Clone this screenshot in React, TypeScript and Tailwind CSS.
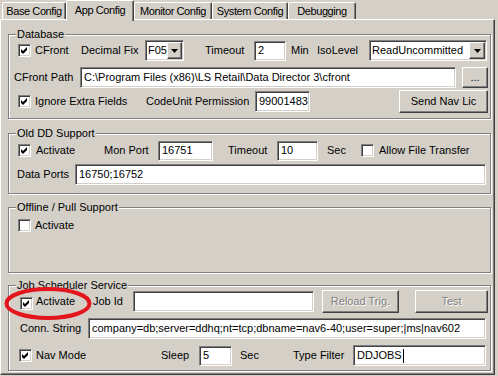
import type { ReactNode } from "react";

const sunken =
  "border border-t-[#808080] border-l-[#808080] border-b-white border-r-white shadow-[inset_1px_1px_0_#404040,inset_-1px_-1px_0_#d4d0c8]";
const raised =
  "border border-t-white border-l-white border-b-[#404040] border-r-[#404040] shadow-[inset_-1px_-1px_0_#808080]";

const Field = ({ className, value, caret }: { className: string; value?: string; caret?: boolean }) => (
  <div className={`${sunken} flex shrink-0 items-center overflow-hidden whitespace-nowrap bg-white pl-[3px] ${className}`}>
    {value}
    {caret && <span className="ml-[1px] h-[14px] w-[1px] bg-black" />}
  </div>
);

const Check = ({ checked }: { checked?: boolean }) => (
  <div className={`${sunken} flex h-[13px] w-[13px] shrink-0 items-center justify-center bg-white`}>
    {checked && (
      <svg width="7" height="7" viewBox="0 0 7 7">
        <path d="M0 2 L2 4 L6 0 L6 3 L2 7 L0 5 Z" fill="#000" />
      </svg>
    )}
  </div>
);

const Button = ({ className, label, disabled }: { className: string; label: string; disabled?: boolean }) => (
  <div
    className={`${raised} flex shrink-0 items-center justify-center bg-[#d4d0c8] ${
      disabled ? "text-[#808080] [text-shadow:1px_1px_0_#fff]" : ""
    } ${className}`}
  >
    {label}
  </div>
);

const Select = ({ className, value }: { className: string; value: string }) => (
  <div className={`${sunken} flex h-[21px] shrink-0 items-center bg-white pl-[2px] ${className}`}>
    <span className="flex-1 whitespace-nowrap">{value}</span>
    <div className={`${raised} mr-[1px] flex h-[17px] w-[16px] items-center justify-center bg-[#d4d0c8]`}>
      <svg width="7" height="4" viewBox="0 0 7 4">
        <path d="M0 0 H7 L3.5 4 Z" fill="#000" />
      </svg>
    </div>
  </div>
);

const Label = ({ className, text }: { className: string; text: string }) => (
  <span className={`shrink-0 whitespace-nowrap ${className}`}>{text}</span>
);

const Group = ({ title, className, children }: { title: string; className: string; children: ReactNode }) => (
  <div
    className={`ml-[7px] w-[483px] border border-[#808080] shadow-[inset_1px_1px_0_#fff,1px_1px_0_#fff] ${className}`}
  >
    <div className="-mt-[7px] ml-[7px] w-fit bg-[#d4d0c8] px-[1px] leading-[13px]">{title}</div>
    {children}
  </div>
);

const tabs = [
  { label: "Base Config", w: "w-[64px]" },
  { label: "App Config", w: "w-[68px]", active: true },
  { label: "Monitor Config", w: "w-[78px]" },
  { label: "System Config", w: "w-[76px]" },
  { label: "Debugging", w: "w-[68px]" },
];

export default function App() {
  return (
    <div className="relative h-[376px] w-[498px] overflow-hidden bg-[#d4d0c8] font-['Liberation_Sans',Arial,sans-serif] text-[11px] leading-[13px] text-black">
      <div className="relative z-10 flex h-[19px] items-end pl-[2px] tracking-[-0.4px]">
        {tabs.map((tab) =>
          tab.active ? (
            <div
              key={tab.label}
              className={`-mb-[2px] flex h-[21px] items-start justify-center rounded-t-[2px] border-l border-t border-r border-l-white border-t-white border-r-[#404040] bg-[#d4d0c8] pt-[3px] shadow-[inset_-1px_0_0_#808080] ${tab.w}`}
            >
              {tab.label}
            </div>
          ) : (
            <div
              key={tab.label}
              className={`flex h-[17px] items-center justify-center whitespace-nowrap rounded-t-[2px] border-l border-t border-r border-l-white border-t-white border-r-[#404040] shadow-[inset_-1px_0_0_#808080] ${tab.w}`}
            >
              {tab.label}
            </div>
          )
        )}
      </div>

      <div className="h-[356px] w-[495px] border border-t-white border-l-white border-r-[#404040] border-b-[#404040] shadow-[inset_-1px_-1px_0_#808080]">
        <Group title="Database" className="mt-[14px] h-[85px]">
          <div className="-mt-[1px] flex h-[21px] items-center">
            <div className="w-[9px] shrink-0" />
            <Check checked />
            <div className="w-[4px] shrink-0" />
            <Label className="w-[46px]" text="CFront" />
            <Label className="w-[64px]" text="Decimal Fix" />
            <Select className="w-[39px]" value="F05" />
            <div className="w-[21px] shrink-0" />
            <Label className="w-[49px]" text="Timeout" />
            <Field className="h-[20px] w-[32px]" value="2" />
            <div className="w-[5px] shrink-0" />
            <Label className="w-[26px]" text="Min" />
            <Label className="w-[52px]" text="IsoLevel" />
            <Select className="w-[118px]" value="ReadUncommitted" />
          </div>
          <div className="mt-[6px] flex h-[21px] items-center">
            <div className="w-[5px] shrink-0" />
            <Label className="w-[66px]" text="CFront Path" />
            <Field className="h-[21px] w-[376px]" value={"C:\\Program Files (x86)\\LS Retail\\Data Director 3\\cfront"} />
            <div className="w-[6px] shrink-0" />
            <Button className="h-[21px] w-[26px]" label="..." />
          </div>
          <div className="mt-[2px] flex h-[23px] items-center">
            <div className="w-[9px] shrink-0" />
            <Check checked />
            <div className="w-[4px] shrink-0" />
            <Label className="w-[111px]" text="Ignore Extra Fields" />
            <Label className="w-[109px]" text="CodeUnit Permission" />
            <Field className="h-[21px] w-[55px]" value="99001483" />
            <div className="w-[89px] shrink-0" />
            <Button className="h-[23px] w-[89px]" label="Send Nav Lic" />
          </div>
        </Group>

        <Group title="Old DD Support" className="mt-[14px] h-[61px]">
          <div className="flex h-[21px] items-center">
            <div className="w-[9px] shrink-0" />
            <Check checked />
            <div className="w-[5px] shrink-0" />
            <Label className="w-[68px]" text="Activate" />
            <Label className="w-[54px]" text="Mon Port" />
            <Field className="h-[20px] w-[55px]" value="16751" />
            <div className="w-[15px] shrink-0" />
            <Label className="w-[49px]" text="Timeout" />
            <Field className="h-[20px] w-[41px]" value="10" />
            <div className="w-[9px] shrink-0" />
            <Label className="w-[34px]" text="Sec" />
            <Check />
            <div className="w-[5px] shrink-0" />
            <Label className="w-[100px]" text="Allow File Transfer" />
          </div>
          <div className="mt-[3px] flex h-[21px] items-center">
            <div className="w-[8px] shrink-0" />
            <Label className="w-[58px]" text="Data Ports" />
            <Field className="h-[21px] w-[411px]" value="16750;16752" />
          </div>
        </Group>

        <Group title="Offline / Pull Support" className="mt-[13px] h-[66px]">
          <div className="mt-[5px] flex h-[13px] items-center">
            <div className="w-[9px] shrink-0" />
            <Check />
            <div className="w-[4px] shrink-0" />
            <Label className="w-[60px]" text="Activate" />
          </div>
        </Group>

        <Group title="Job Scheduler Service" className="mt-[12px] h-[86px]">
          <div className="-mt-[2px] flex h-[23px] items-center">
            <div className="w-[11px] shrink-0" />
            <div className="mt-[3px]">
              <Check checked />
            </div>
            <div className="w-[3px] shrink-0" />
            <Label className="w-[57px]" text="Activate" />
            <Label className="w-[40px]" text="Job Id" />
            <Field className="h-[21px] w-[181px]" />
            <div className="w-[8px] shrink-0" />
            <Button className="h-[23px] w-[77px]" label="Reload Trig." disabled />
            <div className="w-[16px] shrink-0" />
            <Button className="h-[23px] w-[73px]" label="Test" disabled />
          </div>
          <div className="mt-[5px] flex h-[21px] items-center">
            <div className="w-[11px] shrink-0" />
            <Label className="w-[68px]" text="Conn. String" />
            <Field
              className="h-[21px] w-[398px]"
              value="company=db;server=ddhq;nt=tcp;dbname=nav6-40;user=super;|ms|nav602"
            />
          </div>
          <div className="mt-[6px] flex h-[21px] items-center">
            <div className="w-[10px] shrink-0" />
            <Check checked />
            <div className="w-[4px] shrink-0" />
            <Label className="w-[125px]" text="Nav Mode" />
            <Label className="w-[38px]" text="Sleep" />
            <Field className="h-[20px] w-[33px]" value="5" />
            <div className="w-[8px] shrink-0" />
            <Label className="w-[53px]" text="Sec" />
            <Label className="w-[60px]" text="Type Filter" />
            <Field className="h-[21px] w-[133px]" value="DDJOBS" caret />
          </div>
        </Group>
      </div>

      {/* red highlight drawn over the job scheduler checkbox */}
      <svg className="absolute left-[3px] top-[286px]" width="90" height="35" viewBox="0 0 90 35">
        <ellipse cx="45" cy="17.5" rx="41.5" ry="14.5" fill="none" stroke="#e3161d" strokeWidth="4" />
      </svg>
    </div>
  );
}
